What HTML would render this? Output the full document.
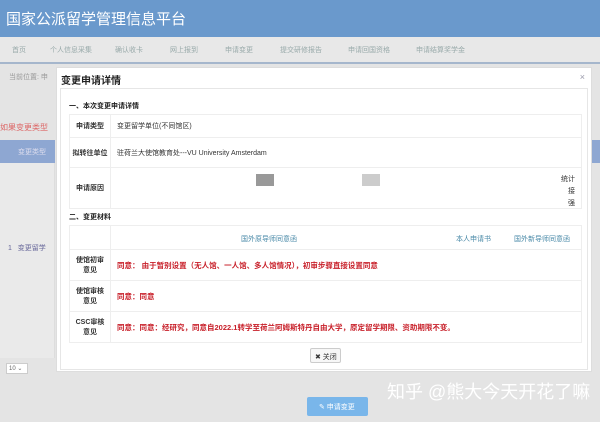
<!DOCTYPE html>
<html><head><meta charset="utf-8"><style>
*{margin:0;padding:0;box-sizing:border-box}
body{width:600px;height:422px;overflow:hidden;background:#e4e4e4;font-family:"Liberation Sans","Noto Sans CJK SC",sans-serif;position:relative}
.a{position:absolute}
.hdr{left:0;top:0;width:600px;height:37px;background:#6a99cc;color:#fff;font-size:15px;padding:8px 0 0 6px}
.nav{left:0;top:37px;width:600px;height:27px;background:#e8e8e8;border-bottom:2px solid #a5b6cc;font-size:7px;color:#9aa}
.nav span{position:absolute;top:8px}
.modal{left:56px;top:67px;width:536px;height:305px;background:#fff;border:1px solid #ddd}
.t{font-size:10px;color:#222}
table{border-collapse:collapse;position:absolute;left:12px;width:513px;font-size:7px;color:#333}
td{border:1px solid #eee;padding:0 6px}
td.l{width:41px;text-align:center;font-weight:bold;color:#333;padding:0 2px}
.r{color:#c8202a;font-weight:bold;font-size:7.5px}
.b{font-size:7px;font-weight:bold;color:#222}
</style></head><body>
<div class="a hdr">国家公派留学管理信息平台</div>
<div class="a nav"><span style="left:12px">首页</span><span style="left:50px">个人信息采集</span><span style="left:115px">确认收卡</span><span style="left:170px">网上报到</span><span style="left:225px">申请变更</span><span style="left:280px">提交研修报告</span><span style="left:348px">申请回国资格</span><span style="left:416px">申请结算奖学金</span></div>
<div class="a" style="left:9px;top:72px;font-size:7px;color:#999">当前位置: 申</div>
<div class="a" style="left:0;top:122px;font-size:8px;color:#d66">如果变更类型</div>
<div class="a" style="left:0;top:140px;width:55px;height:23px;background:#8ea7d2;color:#dde;font-size:7px;padding:7px 0 0 18px">变更类型</div>
<div class="a" style="left:0;top:163px;width:55px;height:195px;background:#eaeaea;border-right:1px solid #ddd"></div>
<div class="a" style="left:8px;top:243px;font-size:7px;color:#669">1 &nbsp;&nbsp;变更留学</div>
<div class="a" style="left:592px;top:140px;width:8px;height:23px;background:#8ea7d2"></div>
<div class="a" style="left:6px;top:363px;width:22px;height:11px;border:1px solid #ccc;background:#fff;font-size:6px;color:#666;padding:1px 2px">10 ⌄</div>
<div class="a" style="left:307px;top:397px;width:61px;height:19px;background:#79b6ea;border-radius:2px;color:#fff;font-size:7px;padding:5px 0 0 12px">✎ 申请变更</div>
<div class="a" style="left:387px;top:378px;font-size:18px;color:#fff;white-space:nowrap">知乎 @熊大今天开花了嘛</div>
<div class="a modal">
 <div class="a t" style="left:4px;top:4px;font-weight:bold">变更申请详情</div>
 <div class="a" style="right:6px;top:4px;font-size:9px;color:#99a">×</div>
 <div class="a" style="left:3px;top:20px;width:528px;height:282px;border:1px solid #e6e6e6"></div>
 <div class="a b" style="left:12px;top:33px">一、本次变更申请详情</div>
 <table style="top:46px">
  <tr style="height:23px"><td class="l">申请类型</td><td>变更留学单位(不同馆区)</td></tr>
  <tr style="height:30px"><td class="l">拟转往单位</td><td>驻荷兰大使馆教育处---VU University Amsterdam</td></tr>
  <tr style="height:41px"><td class="l">申请原因</td><td style="position:relative"><div class="a" style="left:145px;top:6px;width:18px;height:12px;background:#999"></div><div class="a" style="left:251px;top:6px;width:18px;height:12px;background:#ccc"></div><div class="a" style="right:6px;top:6px;font-size:7px;line-height:12px;text-align:right">统计<br>接<br>强</div></td></tr>
 </table>
 <div class="a b" style="left:12px;top:144px">二、变更材料</div>
 <table style="top:157px">
  <tr style="height:24px"><td class="l"></td><td style="color:#4a8aa8;position:relative"><span class="a" style="left:130px;top:8px">国外原导师同意函</span><span class="a" style="left:345px;top:8px">本人申请书</span><span class="a" style="left:403px;top:8px">国外新导师同意函</span></td></tr>
  <tr style="height:31px"><td class="l">使馆初审<br>意见</td><td class="r">同意：  由于暂别设置（无人馆、一人馆、多人馆情况），初审步骤直接设置同意</td></tr>
  <tr style="height:31px"><td class="l">使馆审核<br>意见</td><td class="r">同意：同意</td></tr>
  <tr style="height:31px"><td class="l">CSC审核<br>意见</td><td class="r">同意：同意：经研究，同意自2022.1转学至荷兰阿姆斯特丹自由大学，原定留学期限、资助期限不变。</td></tr>
 </table>
 <div class="a" style="left:253px;top:280px;width:31px;height:15px;border:1px solid #ccc;border-radius:2px;font-size:7px;color:#333;padding:3px 0 0 4px;background:#f7f7f7">✖ 关闭</div>
</div>
</body></html>
